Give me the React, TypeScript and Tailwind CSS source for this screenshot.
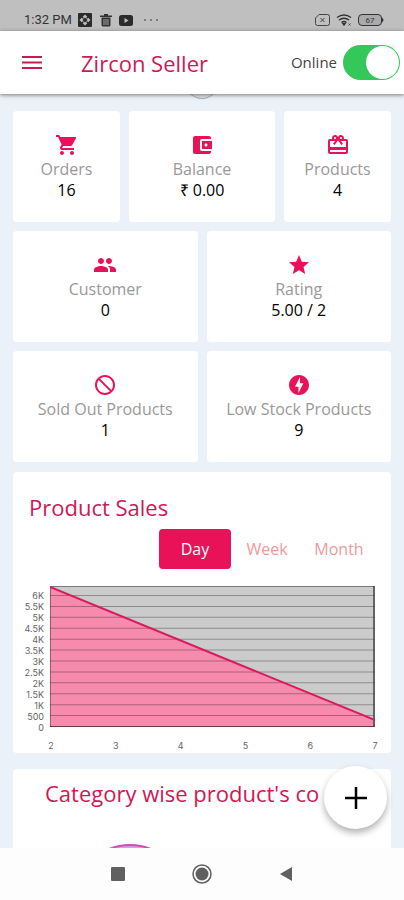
import React, { useState } from "react";
import {
    MdAccountBalanceWallet,
    MdBlock,
    MdCardGiftcard,
    MdGroup,
    MdOfflineBolt,
    MdShoppingCart,
    MdStar,
} from "react-icons/md";

const STATS = [
    { label: "Orders", value: "16", icon: MdShoppingCart },
    { label: "Balance", value: "₹ 0.00", icon: MdAccountBalanceWallet },
    { label: "Products", value: "4", icon: MdCardGiftcard },
    { label: "Customer", value: "0", icon: MdGroup },
    { label: "Rating", value: "5.00 / 2", icon: MdStar },
    { label: "Sold Out Products", value: "1", icon: MdBlock, flip: true },
    { label: "Low Stock Products", value: "9", icon: MdOfflineBolt },
];

const Y_TICKS = ["6K", "5.5K", "5K", "4.5K", "4K", "3.5K", "3K", "2.5K", "2K", "1.5K", "1K", "500", "0"];
const X_TICKS = ["2", "3", "4", "5", "6", "7"];
const PERIODS = ["Day", "Week", "Month"];

function StatusBar() {
    return (
        <div className="flex h-[31px] shrink-0 items-end justify-between bg-[#bfbfbf] pr-5 pb-[3px] pl-6 text-[#333]">
            <div className="flex items-center gap-1.5">
                <span className="font-[Roboto] text-[13px] leading-4">1:32 PM</span>
                <svg width="14" height="14" viewBox="0 0 14 14">
                    <rect width="14" height="14" rx="1" fill="#2b2b2b" />
                    <path d="M7 1.500L12.500 7 7 12.500 1.500 7z" fill="#bfbfbf" />
                    <path d="M7 4.500L9.500 7 7 9.500 4.500 7z" fill="#2b2b2b" />
                    <path d="M3 3l2.500 2.500M11 3L8.500 5.500M3 11l2.500-2.500M11 11L8.500 8.500" stroke="#2b2b2b" strokeWidth="1.200" />
                </svg>
                <svg width="14" height="14" viewBox="0 0 14 14" fill="#333" className="ml-px">
                    <path d="M5 1h4v1.500h4V4H1V2.500h4zM2.500 4.500h9v7.500q0 1.500-1.500 1.500H4q-1.500 0-1.500-1.500z" />
                    <path d="M5 6v6M7 6v6M9 6v6" stroke="#bfbfbf" strokeWidth=".8" />
                </svg>
                <svg width="14" height="11" viewBox="0 0 14 11">
                    <rect width="14" height="11" rx="2.500" fill="#2b2b2b" />
                    <path d="M5.500 3l4 2.500-4 2.500z" fill="#bfbfbf" />
                </svg>
                <svg width="16" height="4" viewBox="0 0 16 4" fill="#666" className="ml-1">
                    <circle cx="2" cy="2" r="1" />
                    <circle cx="8" cy="2" r="1" />
                    <circle cx="14" cy="2" r="1" />
                </svg>
            </div>
            <div className="flex items-center gap-1.5 pb-0.5">
                <svg width="15" height="12" viewBox="0 0 15 12" fill="none" stroke="#444" strokeWidth="1">
                    <path d="M4 .5h8.500q2 0 2 2v7q0 2-2 2h-10q-2 0-2-2V4z" />
                    <path d="M5.500 4l4 4m0-4l-4 4" />
                </svg>
                <svg width="16" height="12" viewBox="0 0 16 12" fill="none" stroke="#333" strokeWidth="1.500">
                    <path d="M1 3.500q7-5 14 0M3 6q5-3.500 10 0M5.500 8.500q2.500-2 5 0" />
                    <path d="M7 9.500h2L8 11z" fill="#333" />
                    <path d="M12.500 9.500l2 2m0-2l-2 2" strokeWidth=".8" />
                </svg>
                <svg width="26" height="12" viewBox="0 0 26 12">
                    <rect x=".5" y=".5" width="23" height="11" rx="3.500" fill="#aaa" stroke="#333" />
                    <path d="M24 3.500q3 2.500 0 5z" fill="#333" />
                    <text x="12" y="9" textAnchor="middle" fontSize="8" fontFamily="Roboto" fill="#333">67</text>
                </svg>
            </div>
        </div>
    );
}

function StatCard({ stat }: { stat: (typeof STATS)[number] }) {
    const Icon = stat.icon;
    return (
        <div className="flex h-[111px] flex-col items-center rounded bg-white pt-[22px] text-[16px] leading-[21px]">
            <Icon className={stat.flip ? "size-6 -scale-x-100 text-[#e91258]" : "size-6 text-[#e91258]"} />
            <span className="mt-0.5 whitespace-nowrap text-[#999]">{stat.label}</span>
            <span className="font-medium text-black">{stat.value}</span>
        </div>
    );
}

function SalesChart() {
    return (
        <div className="mt-[17px] pr-4 pb-0.5">
            <div className="flex">
                <div className="flex w-[37px] shrink-0 flex-col pt-1 pr-1.5 text-right font-[Inter] text-[9px] leading-[11px] text-[#666]">
                    {Y_TICKS.map((t) => (
                        <span key={t}>{t}</span>
                    ))}
                </div>
                <svg viewBox="0 0 324 141" preserveAspectRatio="none" className="h-[141px] min-w-0 flex-1">
                    <rect width="324" height="141" fill="#cbcbcb" />
                    <path d="M0 1L324 134V141H0z" fill="#f78bad" />
                    {Y_TICKS.map((t, i) => (
                        <path key={t} d={`M0 ${9.5 + i * 10.92}H324`} stroke="#000" strokeOpacity=".3" />
                    ))}
                    <path d="M0 .5H324M0 140.500H324" stroke="#000" strokeOpacity=".4" />
                    <path d="M.5 0V141" stroke="#000" strokeOpacity=".35" />
                    <path d="M323 0V141" stroke="#444" strokeWidth="1.500" />
                    <path d="M0 1L324 134" stroke="#d81b60" strokeWidth="2" />
                </svg>
            </div>
            <div className="-mr-1 ml-[34px] flex justify-between pt-[7px] font-[Inter] text-[9px] leading-[11px] text-[#666]">
                {X_TICKS.map((t) => (
                    <span key={t} className="w-2 text-center">{t}</span>
                ))}
            </div>
        </div>
    );
}

export default function App() {
    const [online, setOnline] = useState(true);
    const [period, setPeriod] = useState("Day");

    return (
        <div className="flex h-screen flex-col overflow-hidden bg-[#ebf1f8] font-['Open_Sans',sans-serif]">
            <StatusBar />

            {/* App bar */}
            <header className="z-10 flex h-[63px] shrink-0 items-center bg-white pr-1 pl-5 shadow-[0_1px_4px_rgba(0,0,0,0.5)]">
                <button type="button" aria-label="Menu" className="text-[#c81c50]">
                    <svg width="24" height="24" viewBox="0 0 24 24" stroke="currentColor" strokeWidth="2">
                        <path d="M2 6h20M2 11.500h20M2 17h20" />
                    </svg>
                </button>
                <h1 className="ml-[37px] text-[22px] leading-8 text-[#cf1855]">Zircon Seller</h1>
                <label className="ml-auto flex items-center gap-1.5 text-[15px] text-[#444]">
                    Online
                    <input
                        type="checkbox"
                        role="switch"
                        checked={online}
                        onChange={(e) => setOnline(e.target.checked)}
                        className="h-[35px] w-[57px] appearance-none rounded-full bg-gray-300 p-px before:block before:size-[33px] before:rounded-full before:bg-white checked:bg-[#34c759] checked:before:ml-auto"
                    />
                </label>
            </header>

            <main className="relative min-h-0 flex-1 overflow-hidden px-[13px] pt-[17px]">
                {/* Pull to refresh */}
                <div className="absolute -top-7 left-1/2 size-8 -translate-x-1/2 rounded-full bg-[#dfe3e8] shadow-[0_1px_1px_rgba(0,0,0,0.3)]" />

                <section className="space-y-[9px]">
                    <div className="grid grid-cols-[107fr_146fr_107fr] gap-[9px]">
                        {STATS.slice(0, 3).map((s) => (
                            <StatCard key={s.label} stat={s} />
                        ))}
                    </div>
                    <div className="grid grid-cols-2 gap-[9px]">
                        {STATS.slice(3).map((s) => (
                            <StatCard key={s.label} stat={s} />
                        ))}
                    </div>
                </section>

                {/* Product sales */}
                <section className="mt-[10px] rounded bg-white pt-5">
                    <h2 className="px-4 text-[22px] leading-[30px] text-[#cf1855]">Product Sales</h2>
                    <div className="mt-[7px] flex justify-end pr-4 text-[16px]">
                        {PERIODS.map((p) => (
                            <button
                                key={p}
                                type="button"
                                onClick={() => setPeriod(p)}
                                className={
                                    p === period
                                        ? "h-10 w-[72px] rounded bg-[#e91258] text-white"
                                        : "h-10 w-[72px] rounded text-[#ef9a9a]"
                                }
                            >
                                {p}
                            </button>
                        ))}
                    </div>
                    <SalesChart />
                </section>

                {/* Category chart */}
                <section className="mt-4 h-40 rounded bg-white pt-2">
                    <h2 className="pl-8 text-[22px] leading-8 whitespace-nowrap text-[#cf1855]">
                        Category wise product's co
                    </h2>
                    <svg width="110" height="55" viewBox="0 0 110 55" className="mt-[35px] ml-[62px]">
                        <circle cx="55" cy="55" r="54" fill="#d9a0dc" stroke="#c850b8" strokeWidth="2" />
                    </svg>
                </section>

                <button
                    type="button"
                    aria-label="Add"
                    className="absolute right-[17px] bottom-[19px] flex size-[63px] items-center justify-center rounded-full bg-white text-black shadow-[0_4px_7px_rgba(0,0,0,0.3)]"
                >
                    <svg width="22" height="22" viewBox="0 0 22 22" stroke="currentColor" strokeWidth="2.500">
                        <path d="M11 0v22M0 11h22" />
                    </svg>
                </button>
            </main>

            {/* System navigation */}
            <nav className="flex h-[52px] shrink-0 items-center justify-center gap-[67px] bg-[#fdfdfd] text-[#606060]">
                <button type="button" aria-label="Recents" className="flex w-[14px]">
                    <svg width="14" height="14" viewBox="0 0 14 14" fill="currentColor">
                        <rect width="14" height="14" rx="1" />
                    </svg>
                </button>
                <button type="button" aria-label="Home" className="flex w-5">
                    <svg width="20" height="20" viewBox="0 0 20 20">
                        <circle cx="10" cy="10" r="9" fill="none" stroke="currentColor" strokeWidth="1.500" />
                        <circle cx="10" cy="10" r="6.500" fill="currentColor" />
                    </svg>
                </button>
                <button type="button" aria-label="Back" className="flex w-[14px]">
                    <svg width="14" height="16" viewBox="0 0 14 16" fill="currentColor">
                        <path d="M13 1v14L1 8z" />
                    </svg>
                </button>
            </nav>
        </div>
    );
}
